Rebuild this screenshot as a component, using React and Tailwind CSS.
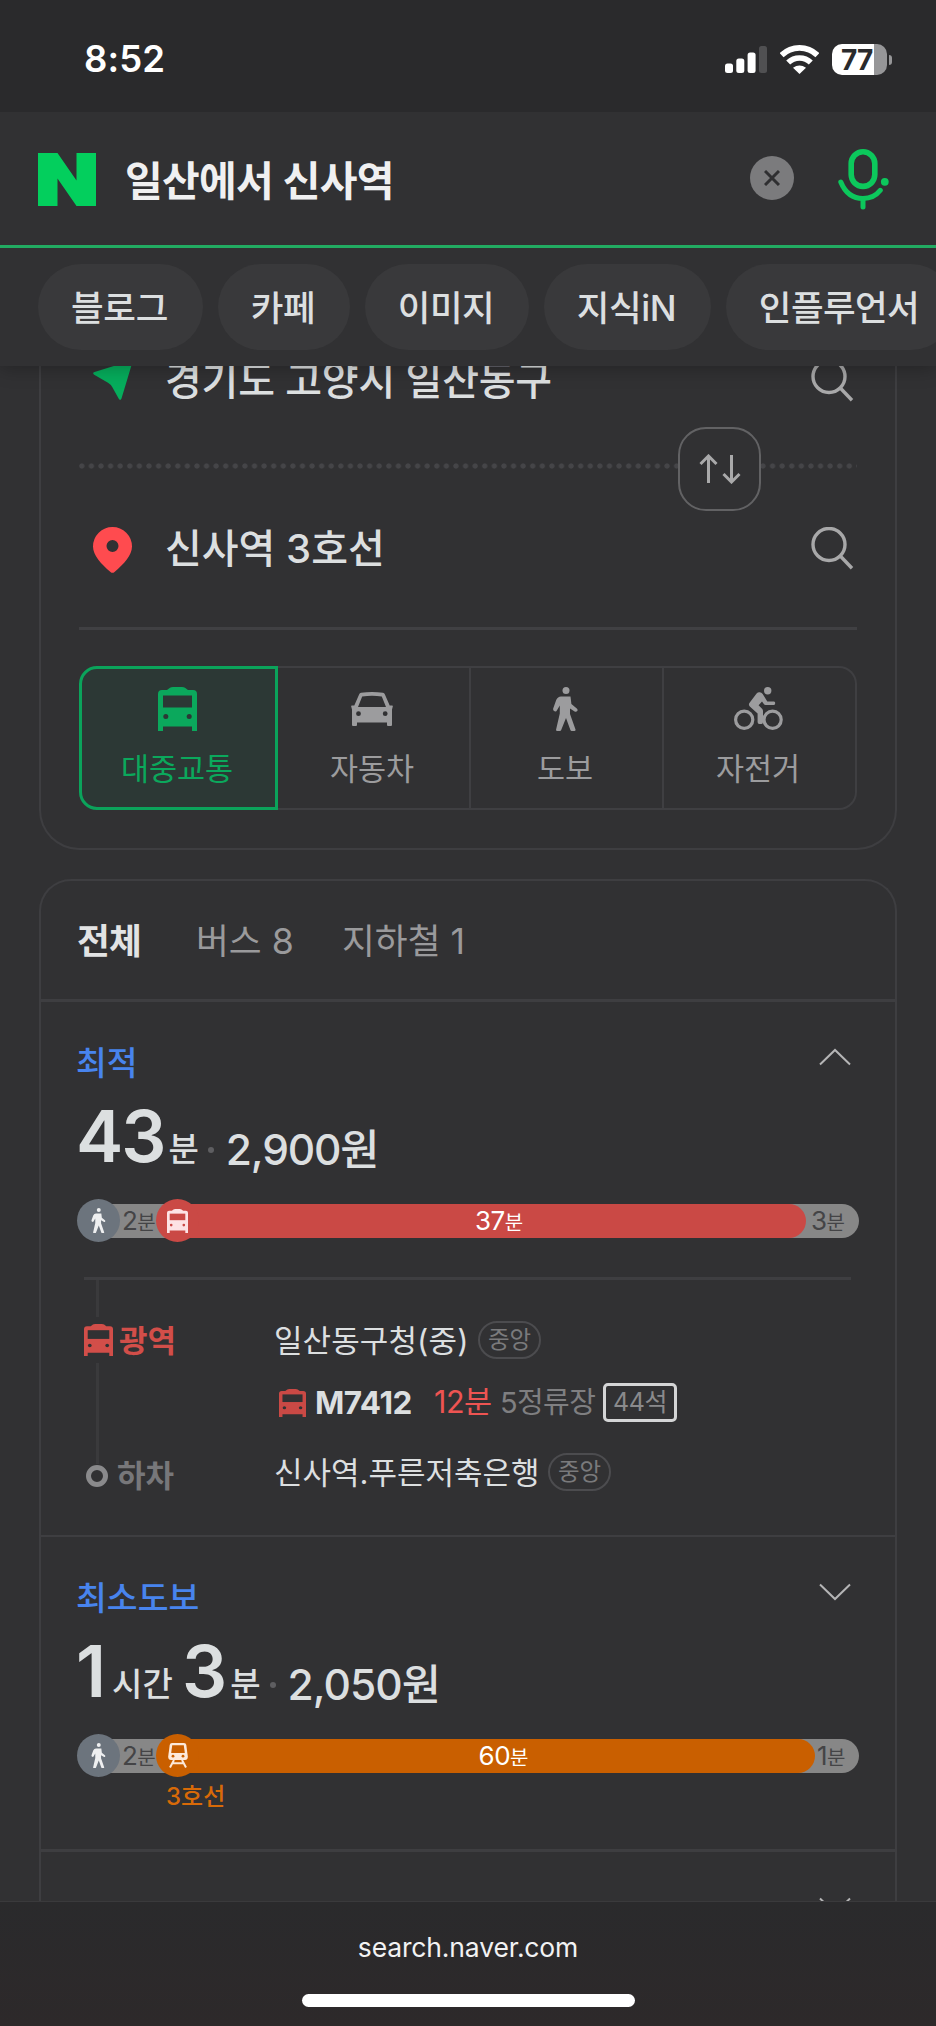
const BusIcon = ({ className, hole }) => (
  <svg viewBox="0 0 39 44" className={className} preserveAspectRatio="none" aria-hidden="true">
    <path d="M4 3H9L12 .8Q13 0 15 0H24Q26 0 27 .8L30 3H35Q39 3 39 7V44H34V39.5H5V44H0V7Q0 3 4 3Z" fill="currentColor" />
    <path d="M5 8.5H34V20.5H5Z" fill={hole} />
    <circle cx="7.8" cy="29.5" r="2.5" fill={hole} />
    <circle cx="31.2" cy="29.5" r="2.5" fill={hole} />
  </svg>
);

const CarIcon = () => (
  <svg viewBox="0 0 42 34" className="h-[34px] w-[42px]" aria-hidden="true">
    <path
      fillRule="evenodd"
      fill="currentColor"
      d="M8.2 2.2Q8.7 1 10 .8Q21 -.8 32 .8Q33.3 1 33.8 2.2L38.7 13.5H41.2Q42 13.5 41.8 14.5L41 17.5V33Q41 34 40 34H37Q36 34 36 33V30.5H6V33Q6 34 5 34H2Q1 34 1 33V17.5L.2 14.5Q0 13.5 .8 13.5H3.3ZM11.2 4.4L7 15H35L30.8 4.4Q21 3 11.2 4.4ZM7.5 19.3A2.4 2.4 0 1 0 7.5 24.1A2.4 2.4 0 1 0 7.5 19.3ZM34.2 19.3A2.4 2.4 0 1 0 34.2 24.1A2.4 2.4 0 1 0 34.2 19.3Z"
    />
  </svg>
);

const WalkIcon = ({ className }) => (
  <svg viewBox="0 0 25 44" className={className} aria-hidden="true" fill="currentColor">
    <circle cx="13" cy="3.5" r="3.5" />
    <path d="M8 9.5H17.5L18.4 17L23.8 21.5Q25.3 23 24 24.3Q23 25.2 21.6 24.4L17 21.5V27L22.5 42.5Q22.8 44 21.3 44H18.7Q17.8 44 17.4 43L13 31L8.2 43Q7.8 44 6.8 44H4.2Q2.8 44 3.1 42.5L6.8 26.5V18.5L4 23.3Q3.2 25 1.6 24.3Q-.3 23.5 .2 21.5L3.2 13Q4.8 9.5 8 9.5Z" />
  </svg>
);

const BikeIcon = () => (
  <svg viewBox="0 0 49 44" className="h-[44px] w-[49px]" aria-hidden="true">
    <g fill="none" stroke="currentColor" strokeWidth="3.2">
      <circle cx="10.2" cy="32.7" r="8.6" />
      <circle cx="38.6" cy="32.7" r="8.6" />
    </g>
    <circle cx="33.7" cy="3.8" r="3.7" fill="currentColor" />
    <path
      fill="currentColor"
      d="M25.7 5.2Q27.5 5.5 28.7 7L33.3 14.6H40Q41.3 14.9 41.2 16.3Q41.1 17.8 40 18H31.5Q30.5 18 30 17.2L28 14.5L24.6 18.2L28.3 22Q29 22.8 29 24V35Q29 37 27.5 37H25.3Q23.6 37 23.6 35V26.5L15.8 19.6Q14 17.6 15.8 15.4L22.6 6.5Q24 4.9 25.7 5.2Z"
    />
  </svg>
);

const TrainIcon = ({ className }) => (
  <svg viewBox="0 0 20 25" className={className} aria-hidden="true">
    <path d="M4 0H16Q18 0 18.3 2L19.8 13.5Q20 16.8 17 17H3Q0 16.8 .2 13.5L1.7 2Q2 0 4 0Z" fill="#fde9da" />
    <path d="M4.2 2.3H15.8L16.8 10H3.2Z" fill="#c95f00" />
    <circle cx="5" cy="13.2" r="1.4" fill="#c95f00" />
    <circle cx="15" cy="13.2" r="1.4" fill="#c95f00" />
    <path d="M6 17L2 24.5M14 17L18 24.5M4.8 20.3H15.2" stroke="#fde9da" strokeWidth="2" />
  </svg>
);

const SearchIcon = () => (
  <svg viewBox="0 0 43 43" className="h-[43px] w-[43px] text-[#a8a8a9]" fill="none" stroke="currentColor" strokeWidth="3.4" aria-hidden="true">
    <circle cx="18" cy="17.5" r="16" />
    <path d="M29.3 29L41 41.2" />
  </svg>
);

const Chevron = ({ up }) => (
  <svg viewBox="0 0 32 18" className="h-[18px] w-[32px] text-[#b5b5b6]" fill="none" stroke="currentColor" strokeWidth="2" aria-hidden="true">
    <path d={up ? "M1 16.5L16 2L31 16.5" : "M1 1.5L16 16L31 1.5"} />
  </svg>
);

const Signal = () => (
  <svg viewBox="0 0 42 28" className="h-[28px] w-[42px]" aria-hidden="true" fill="#fff">
    <rect x="0" y="17.5" width="8" height="9.5" rx="2.5" />
    <rect x="11.3" y="12.5" width="8" height="14.5" rx="2.5" />
    <rect x="22.6" y="6.5" width="8" height="20.5" rx="2.5" />
    <rect x="34" y="0" width="8" height="27" rx="2.5" fill="#505052" />
  </svg>
);

const Wifi = () => (
  <svg viewBox="0 0 39 29" className="h-[29px] w-[39px]" aria-hidden="true">
    <g fill="none" stroke="#fff" strokeWidth="5.6">
      <path d="M1.6 10.2A25.5 25.5 0 0 1 37.4 10.2" />
      <path d="M8.2 17.6A16 16 0 0 1 30.8 17.6" />
    </g>
    <path d="M19.5 29L13 22.8Q19.5 18.3 26 22.8Z" fill="#fff" />
  </svg>
);

const Mic = () => (
  <svg viewBox="0 0 51 61" className="h-[61px] w-[51px]" aria-hidden="true" fill="none" stroke="#0cc85c" strokeLinecap="round">
    <rect x="13.2" y="2.8" width="23.6" height="34.6" rx="11.8" strokeWidth="5.6" />
    <path d="M2.8 33Q9.5 49.5 25 49.5Q36 49.5 42.3 41.3" strokeWidth="5" />
    <path d="M25 50V58" strokeWidth="5" />
    <circle cx="46.8" cy="32.8" r="3.9" fill="#0cc85c" stroke="none" />
  </svg>
);

const Pill = () => (
  <span className="flex h-[38px] w-[63px] items-center justify-center rounded-full border-2 border-[#4c4c4f] text-[23.5px] text-[#7a7a7c]">
    중앙
  </span>
);

const Minutes = ({ n }) => (
  <span className="flex items-baseline">
    <span className="text-[26px] tracking-[-0.5px]">{n}</span>
    <span className="text-[20px]">분</span>
  </span>
);

const chips = [
  ["블로그", "w-[165px] tracking-[-0.4px]"],
  ["카페", "w-[132px] tracking-[-0.5px]"],
  ["이미지", "w-[164px] tracking-[-0.5px]"],
  ["지식iN", "w-[167px] tracking-[-0.4px]"],
  ["인플루언서", "w-[228px] tracking-[-0.6px]"],
];

const TabItem = ({ label, children, className }) => (
  <div className={"flex flex-col items-center pr-[3px] " + className}>
    <div className="mt-[18px] flex h-[46px] items-center justify-center">{children}</div>
    <span className="mt-[17px] text-[30.5px] leading-[40px]">{label}</span>
  </div>
);

export default function App() {
  return (
    <div className="flex h-[2026px] w-[936px] flex-col overflow-hidden bg-[#313133] font-['Inter','Noto_Sans_CJK_KR',sans-serif] leading-none whitespace-nowrap text-[#dcdfe0]">
      <header className="z-10 flex h-[366px] shrink-0 flex-col bg-[#313133] shadow-[0_2px_18px_rgba(0,0,0,0.28)]">
        <div className="flex h-[112px] items-center bg-[#2a2a2c] pt-[7px] pl-[84px]">
          <span className="w-[641px] text-[36.5px] font-semibold tracking-[0.1px] text-white">8:52</span>
          <Signal />
          <span className="ml-[13px]"><Wifi /></span>
          <span className="ml-[13px] flex h-[31px] w-[55px] items-center overflow-hidden rounded-[10px] bg-linear-to-r from-white from-77% to-[#969698] to-77% pl-[9px] text-[28px] font-bold tracking-[-0.8px] text-[#2a2a2c]">77</span>
          <span className="ml-[2px] h-[10px] w-[3px] rounded-r-full bg-[#969698]" />
        </div>
        <div className="flex h-[133px] items-center pl-[38px]">
          <svg viewBox="0 0 58 53" className="mt-[2px] h-[53px] w-[58px]" aria-hidden="true">
            <path d="M0 0H19.5L38.5 27.5V0H58V53H38.5L19.5 25.5V53H0Z" fill="#03cf5d" />
          </svg>
          <span className="ml-[29px] w-[625px] pt-[6px] text-[41px] font-semibold tracking-[-0.7px] text-[#f0f0f1]">일산에서 신사역</span>
          <span className="-mt-[2px] flex h-[44px] w-[44px] items-center justify-center rounded-full bg-[#7b7b7d]">
            <svg viewBox="0 0 16 16" className="h-[16px] w-[16px]" stroke="#2f2f31" strokeWidth="3" aria-hidden="true">
              <path d="M1 1L15 15M15 1L1 15" />
            </svg>
          </span>
          <span className="ml-[44px] pt-[2px]"><Mic /></span>
        </div>
        <div className="h-[3px] shrink-0 bg-[#22ab62]" />
        <div className="flex gap-[15px] pt-[16px] pl-[38px]">
          {chips.map(([label, cls]) => (
            <span key={label} className={"flex h-[86px] shrink-0 items-center justify-center rounded-full bg-[#39393b] pt-[3px] pr-[2px] text-[35.5px] font-medium " + cls}>
              {label}
            </span>
          ))}
        </div>
      </header>

      <main className="h-[1535px] shrink-0 overflow-hidden px-[39px]">
        <section className="-mt-[40px] h-[524px] rounded-b-[40px] border-2 border-t-0 border-[#3e3e41] px-[38px]">
          <div className="flex h-[108px] items-center">
            <svg viewBox="0 0 40 40" className="ml-[14px] h-[40px] w-[40px]" aria-hidden="true">
              <path d="M37.5 .8Q40 0 39.3 2.6L28.5 38.5Q27.2 41.3 25.6 38.6L19.5 27.5Q18.2 24.7 15 22.8L1.2 14.7Q-1 13 1.5 12Z" fill="#06ad5c" />
            </svg>
            <span className="ml-[32px] w-[646px] pt-[2px] text-[40px] font-medium tracking-[-0.2px]">경기도 고양시 일산동구</span>
            <SearchIcon />
          </div>
          <div className="flex h-[70px] items-center bg-[radial-gradient(circle,#454548_2.2px,transparent_3px)] bg-[length:9.6px_8px] bg-[position:-2px_28px] bg-repeat-x">
            <span className="-my-[8px] ml-[599px] flex h-[84px] w-[83px] items-center justify-center rounded-[28px] border-2 border-[#626264] bg-[#313133]">
              <svg viewBox="0 0 42 30" className="h-[30px] w-[42px]" fill="none" stroke="#a9a9aa" strokeWidth="3" aria-hidden="true">
                <path d="M9.5 29V2.5M1.5 10L9.5 2L17.5 10M32.5 1V27.5M24.5 20L32.5 28L40.5 20" />
              </svg>
            </span>
          </div>
          <div className="flex h-[88px] items-center">
            <svg viewBox="0 0 39 46" className="mt-[3px] ml-[14px] h-[46px] w-[39px]" aria-hidden="true">
              <path fillRule="evenodd" fill="#ff4b4f" d="M19.5 0A19.5 19.5 0 0 1 39 19.5C39 28 31 37 21.5 45Q19.5 46.7 17.5 45C8 37 0 28 0 19.5A19.5 19.5 0 0 1 19.5 0ZM19.5 13A6 6 0 1 0 19.5 25A6 6 0 1 0 19.5 13Z" />
            </svg>
            <span className="ml-[33px] w-[646px] pt-[2px] text-[40px] font-medium">신사역 3호선</span>
            <SearchIcon />
          </div>
          <div className="mt-[35px] h-[3px] bg-[#404043]" />
          <div className="mt-[36px] flex h-[144px] text-[#9c9c9e]">
            <TabItem label="대중교통" className="w-[199px] rounded-l-[18px] border-[3px] border-[#0ba35b] bg-[#2c3835] text-[#0ba85c] *:first:mt-[17px]">
              <BusIcon className="h-[44px] w-[39px]" hole="#2c3835" />
            </TabItem>
            <TabItem label="자동차" className="w-[193px] border-y-2 border-r-2 border-[#3f3f42]"><CarIcon /></TabItem>
            <TabItem label="도보" className="w-[193px] border-y-2 border-r-2 border-[#3f3f42]"><WalkIcon className="h-[44px] w-[25px]" /></TabItem>
            <TabItem label="자전거" className="w-[193px] rounded-r-[18px] border-2 border-l-0 border-[#3f3f42]"><BikeIcon /></TabItem>
          </div>
        </section>

        <section className="mt-[29px] rounded-t-[32px] border-2 border-b-0 border-[#3e3e41]">
          <div className="flex h-[121px] items-center border-b-[3px] border-[#3e3e41] pt-[4px] pl-[36px] text-[35.7px] text-[#9a9a9c]">
            <span className="w-[119px] font-bold tracking-[-0.8px] text-[#e2e3e4]">전체</span>
            <span className="w-[146px]">버스 8</span>
            <span>지하철 1</span>
          </div>

          <article className="h-[535px] border-b-2 border-[#3e3e41] pr-[36px] pl-[35px]">
            <div className="flex h-[64px] items-end justify-between pr-[8px]">
              <span className="relative top-[14px] text-[33.5px] leading-[34px] font-medium text-[#4884ee]">최적</span>
              <Chevron up />
            </div>
            <div className="mt-[25px] flex h-[90px] items-center">
              <span className="text-[71px] font-semibold tracking-[-2px]">43</span>
              <span className="mt-[26px] ml-[4px] text-[33px] font-medium">분</span>
              <span className="mt-[27px] ml-[9px] h-[6px] w-[6px] rounded-full bg-[#5e5e61]" />
              <span className="mt-[28px] ml-[12px] text-[42.5px] font-medium tracking-[-1.2px]">2,900원</span>
            </div>
            <div className="mt-[18px] ml-px flex h-[43px] items-center">
              <span className="z-10 flex h-[43px] w-[43px] items-center justify-center rounded-full bg-[#6c747d] text-[#eeeff0]"><WalkIcon className="h-[25px] w-[15px]" /></span>
              <span className="-ml-[20px] flex h-[34px] w-[77px] items-center bg-[#878787] pl-[22px] text-[#444446]"><Minutes n="2" /></span>
              <span className="z-10 -ml-[21px] flex h-[43px] w-[43px] items-center justify-center rounded-full bg-[#ca4945] text-[#fde3e5]"><BusIcon className="h-[24px] w-[21px]" hole="#ca4945" /></span>
              <span className="-ml-[22px] flex h-[34px] grow items-center rounded-r-full bg-[#878787]">
                <span className="flex h-[34px] w-[629px] items-center justify-center rounded-r-[17px] bg-[#ca4945] pl-[15px] text-white"><Minutes n="37" /></span>
                <span className="pl-[5px] text-[#444446]"><Minutes n="3" /></span>
              </span>
            </div>
            <div className="mx-[8px] mt-[35px] h-[3px] bg-[#3e3e41]" />
            <div className="flex pl-px">
              <div className="flex w-[197px] flex-col pl-[7px]">
                <div className="ml-[12px] h-[37px] w-[3px] bg-[#3a3a3c]" />
                <div className="mt-[4px] flex h-[38px] items-center text-[31px] font-bold text-[#d24e49]">
                  <BusIcon className="h-[32px] w-[29px]" hole="#313133" />
                  <span className="ml-[6px]">광역</span>
                </div>
                <div className="mt-[4px] ml-[12px] h-[101px] w-[3px] bg-[#3a3a3c]" />
                <div className="flex h-[24px] items-center text-[31px] font-bold text-[#77777a]">
                  <span className="ml-[2px] h-[22px] w-[22px] rounded-full border-[5px] border-[#8a8a8c]" />
                  <span className="-mt-[2px] ml-[9px]">하차</span>
                </div>
              </div>
              <div className="flex flex-col text-[31px]">
                <div className="mt-[41px] flex h-[38px] items-center">
                  <span className="w-[204px] tracking-[0.1px]">일산동구청(중)</span>
                  <Pill />
                </div>
                <div className="mt-[24px] flex h-[39px] items-center pl-[5px]">
                  <BusIcon className="h-[28px] w-[27px] text-[#ca4945]" hole="#313133" />
                  <span className="ml-[9px] w-[119px] text-[31.5px] font-bold tracking-[-0.5px]">M7412</span>
                  <span className="w-[66px] text-[30.5px] tracking-[-0.5px] text-[#ee5452]">12분</span>
                  <span className="w-[103px] text-[29px] tracking-[-0.6px] text-[#7f7f81]">5정류장</span>
                  <span className="flex h-[39px] w-[74px] items-center justify-center rounded-[5px] border-[3px] border-[#d4d5d6] text-[25px] tracking-[-0.5px] text-[#8a8a8c]">44석</span>
                </div>
                <div className="mt-[31px] flex h-[38px] items-center">
                  <span className="w-[274px]">신사역.푸른저축은행</span>
                  <Pill />
                </div>
              </div>
            </div>
          </article>

          <article className="h-[315px] border-b-[3px] border-[#3e3e41] pr-[36px] pl-[35px]">
            <div className="flex h-[64px] items-end justify-between pr-[8px]">
              <span className="relative top-[14px] text-[33.5px] leading-[34px] font-medium text-[#4884ee]">최소도보</span>
              <Chevron />
            </div>
            <div className="mt-[25px] flex h-[90px] items-center">
              <span className="text-[71px] font-semibold">1</span>
              <span className="mt-[26px] ml-[6px] w-[70px] text-[33px] font-medium">시간</span>
              <span className="text-[71px] font-semibold">3</span>
              <span className="mt-[26px] ml-[3px] text-[33px] font-medium">분</span>
              <span className="mt-[27px] ml-[9px] h-[6px] w-[6px] rounded-full bg-[#5e5e61]" />
              <span className="mt-[28px] ml-[12px] text-[42.5px] font-medium tracking-[-1px]">2,050원</span>
            </div>
            <div className="mt-[18px] ml-px flex h-[43px] items-center">
              <span className="z-10 flex h-[43px] w-[43px] items-center justify-center rounded-full bg-[#6c747d] text-[#eeeff0]"><WalkIcon className="h-[25px] w-[15px]" /></span>
              <span className="-ml-[20px] flex h-[34px] w-[77px] items-center bg-[#878787] pl-[22px] text-[#444446]"><Minutes n="2" /></span>
              <span className="z-10 -ml-[21px] flex h-[43px] w-[43px] items-center justify-center rounded-full bg-[#c95f00]"><TrainIcon className="h-[25px] w-[20px]" /></span>
              <span className="-ml-[22px] flex h-[34px] grow items-center rounded-r-full bg-[#878787]">
                <span className="flex h-[34px] w-[638px] items-center justify-center rounded-r-[17px] bg-[#c95f00] pl-[15px] text-white"><Minutes n="60" /></span>
                <span className="pl-[2px] text-[#444446]"><Minutes n="1" /></span>
              </span>
            </div>
            <div className="mt-[8px] ml-[90px] text-[24px] leading-[24px] font-medium text-[#d86a08]">3호선</div>
          </article>
          <div className="flex justify-end pt-[45px] pr-[44px]"><Chevron /></div>
        </section>
      </main>

      <footer className="z-10 flex h-[125px] shrink-0 flex-col items-center border-t border-[#3a3a3c] bg-linear-to-b from-[#2a2a2c] to-[#2d292a]">
        <span className="mt-[32px] text-[26.5px] leading-[27px] tracking-[-0.15px] text-[#f2f2f3]">search.naver.com</span>
        <span className="mt-[33px] h-[13px] w-[333px] rounded-full bg-white" />
      </footer>
    </div>
  );
}
